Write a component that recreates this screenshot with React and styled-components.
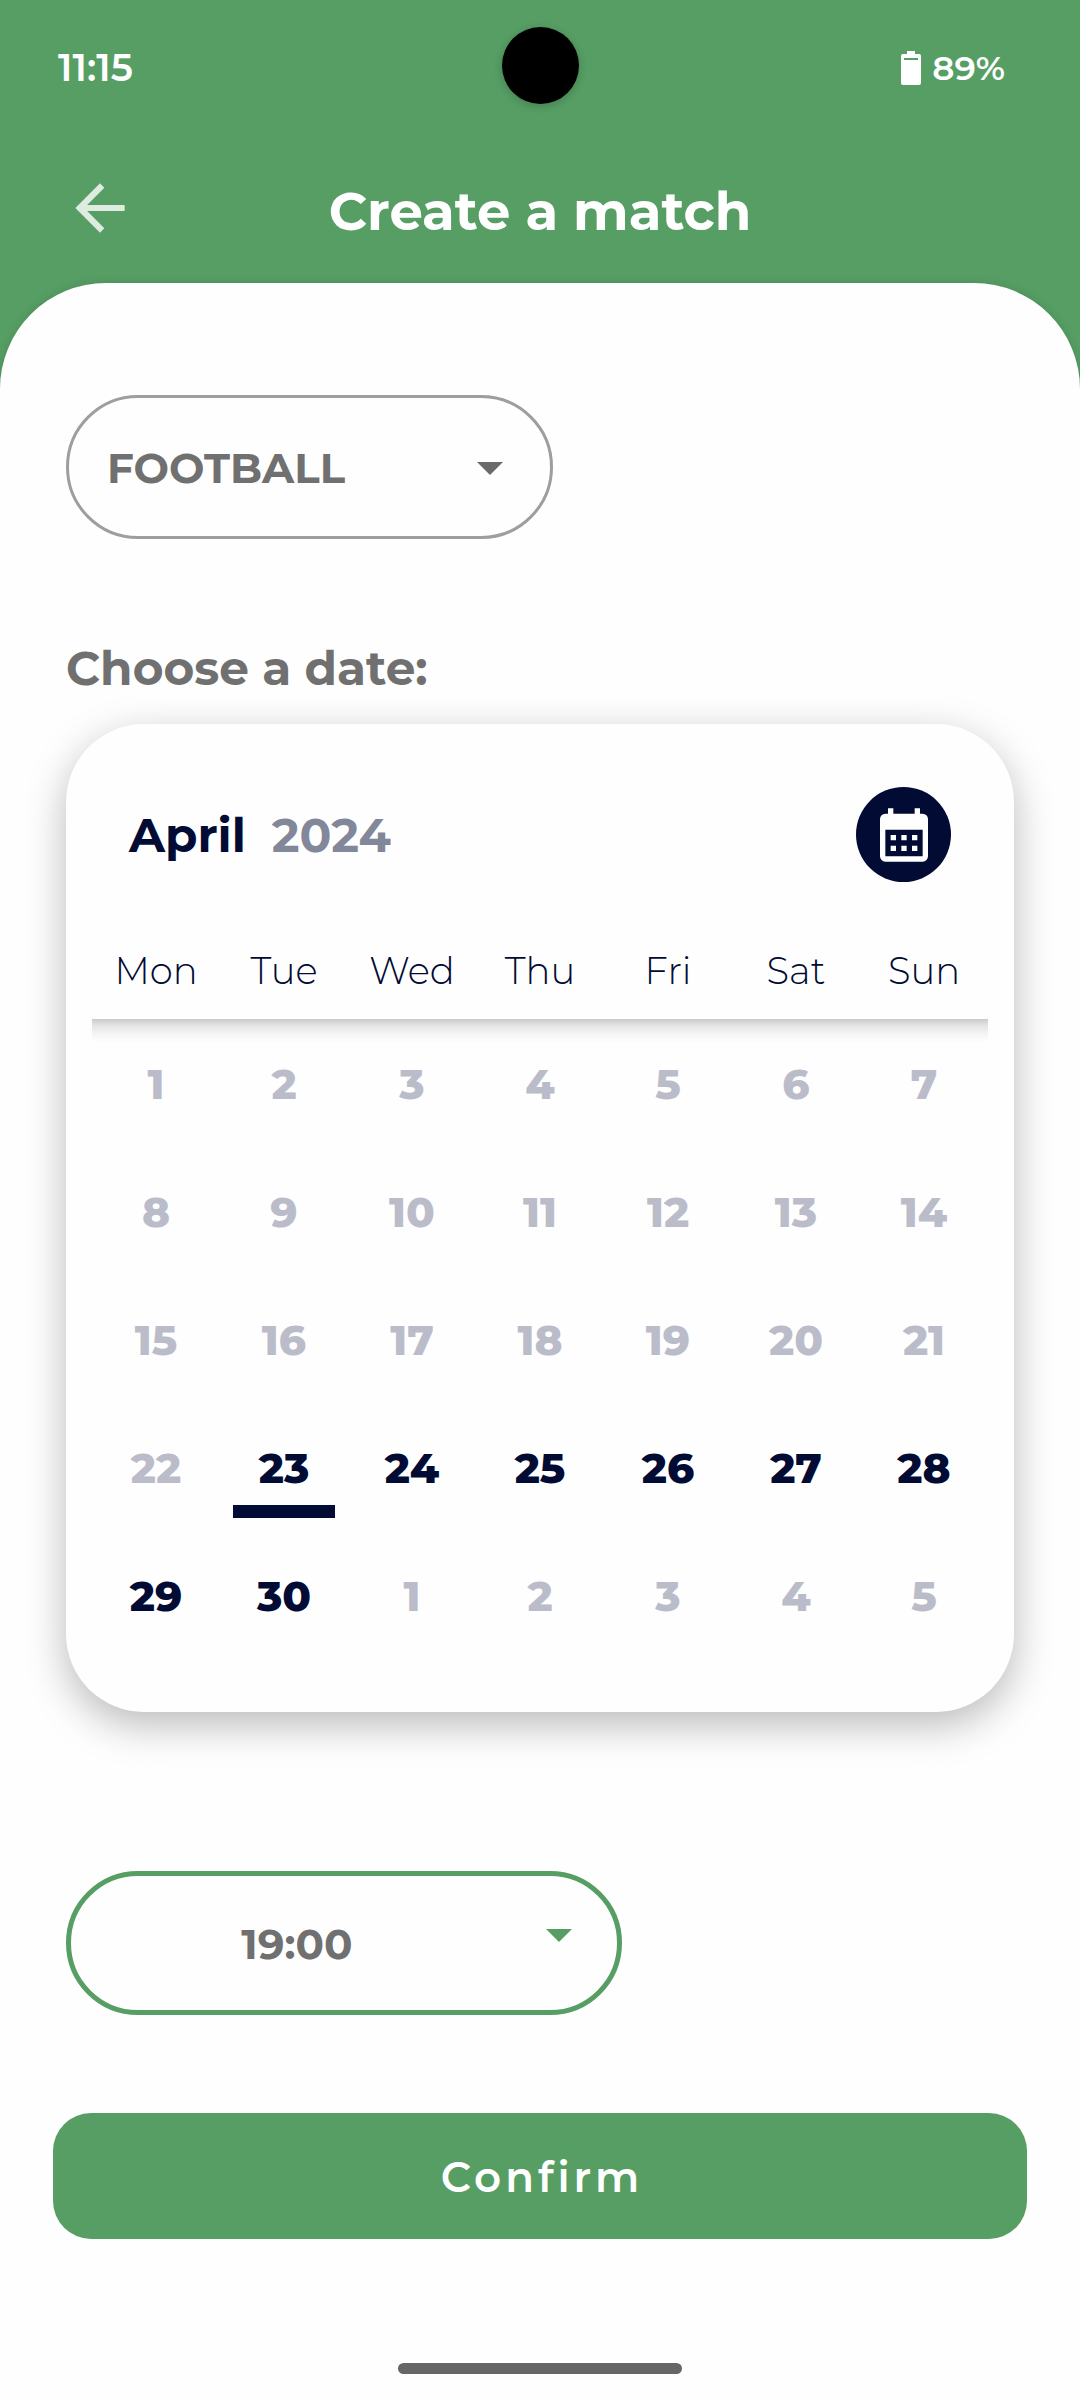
import React, { useState } from "react";
import styled, { createGlobalStyle } from "styled-components";

const color = {
  green: "#569e64",
  navy: "#010b33",
  grey: "#707070",
  line: "#9e9e9e",
  year: "#82879a",
  faded: "#babdc9",
  paper: "#fefefe",
};

const GlobalStyle = createGlobalStyle`
  *, *::before, *::after { box-sizing: border-box; }
  body { margin: 0; background: ${color.green}; }
  button, select { font: inherit; color: inherit; margin: 0; }
`;

const Screen = styled.div`
  display: flex;
  flex-direction: column;
  min-height: 100vh;
  background: ${color.green};
  color: ${color.grey};
  font-family: Montserrat, Inter, "Open Sans", sans-serif;
`;

const StatusBar = styled.div`
  display: grid;
  grid-template-columns: 1fr auto 1fr;
  align-items: center;
  height: 131px;
  padding: 0 58px;
  color: #fff;
  font-weight: 600;
  line-height: 44px;
`;

const Clock = styled.span`
  padding-top: 4px;
  font-size: 38px;
`;

const StatusGroup = styled.div`
  display: flex;
  align-items: center;
  justify-content: flex-end;
  gap: 11px;
  padding: 4px 17px 0 0;
  font-size: 34px;
`;

const Camera = styled.span`
  width: 77px;
  height: 77px;
  border-radius: 50%;
  background: #000;
  box-shadow: 0 2px 8px rgba(0, 0, 0, 0.2);
`;

const TitleBar = styled.header`
  display: grid;
  grid-template-columns: 1fr auto 1fr;
  align-items: center;
  height: 152px;
  padding: 2px 63px 0;
  color: #fff;
`;

const BackButton = styled.button`
  display: flex;
  justify-self: start;
  padding: 0;
  border: 0;
  background: none;
  color: #fff;
  opacity: 0.8;
  cursor: pointer;
`;

const Title = styled.h1`
  margin: 0;
  padding-top: 6px;
  font-size: 53px;
  font-weight: 700;
  line-height: 64px;
`;

const Sheet = styled.main`
  display: flex;
  flex: 1;
  flex-direction: column;
  align-items: stretch;
  padding: 112px 53px 26px;
  border-radius: 106px 106px 0 0;
  background: ${color.paper};
  box-shadow: 0 0 10px rgba(0, 0, 0, 0.12);
`;

const Fields = styled.div`
  display: flex;
  flex-direction: column;
  padding: 0 13px;
`;

const Picker = styled.div`
  display: grid;
  width: ${(p) => p.$width}px;
  max-width: 100%;
  height: 144px;
  color: ${(p) => p.$tone};

  > * { grid-area: 1 / 1; }
`;

const PickerSelect = styled.select`
  width: 100%;
  appearance: none;
  padding: 2px ${(p) => (p.$centered ? 94 : 40)}px 0 ${(p) => (p.$centered ? 0 : 38)}px;
  border: ${(p) => p.$stroke}px solid ${(p) => p.$tone};
  border-radius: 72px;
  background: transparent;
  color: ${color.grey};
  font-size: 42px;
  font-weight: 700;
  text-align-last: ${(p) => (p.$centered ? "center" : "left")};
  cursor: pointer;
`;

const Caret = styled.svg`
  align-self: ${(p) => (p.$raised ? "start" : "center")};
  justify-self: end;
  margin: ${(p) => (p.$raised ? 58 : 2)}px 50px 0 0;
  pointer-events: none;
`;

const DateLabel = styled.h2`
  margin: 102px 0 27px;
  font-size: 47px;
  font-weight: 700;
  line-height: 56px;
`;

const Card = styled.section`
  margin-bottom: 159px;
  padding: 63px 26px 53px;
  border-radius: 78px;
  background: ${color.paper};
  box-shadow: 0 13px 40px rgba(0, 0, 0, 0.27);
  color: ${color.navy};
`;

const CardHead = styled.div`
  display: flex;
  align-items: center;
  justify-content: space-between;
  margin-bottom: 39px;
  padding: 0 37px;
`;

const Month = styled.div`
  display: flex;
  gap: 26px;
  padding-top: 2px;
  font-size: 47px;
  font-weight: 700;
  line-height: 56px;
`;

const Year = styled.span`
  color: ${color.year};
`;

const CalendarButton = styled.button`
  display: flex;
  align-items: center;
  justify-content: center;
  width: 95px;
  height: 95px;
  padding: 0;
  border: 0;
  border-radius: 50%;
  background: ${color.navy};
  color: #fff;
  cursor: pointer;
`;

const Days = styled.table`
  width: 100%;
  table-layout: fixed;
  border-collapse: collapse;

  tbody {
    background: linear-gradient(#cacaca, #e6e6e6 30%, #f6f6f6 65%, ${color.paper}) no-repeat;
    background-size: 100% 24px;
  }
`;

const Weekday = styled.th`
  height: 98px;
  padding: 0;
  font-size: 37px;
  font-weight: 300;
`;

const DayCell = styled.td`
  height: 128px;
  padding: 2px 0 0;
  text-align: center;
`;

const DayButton = styled.button`
  width: 102px;
  height: 100px;
  padding: 13px 0 0;
  border: solid transparent;
  border-width: 0 0 13px;
  border-bottom-color: ${(p) => (p.$selected ? color.navy : "transparent")};
  background: none;
  color: ${color.navy};
  font-size: 42px;
  font-weight: 800;
  line-height: 48px;
  cursor: pointer;

  &:disabled {
    color: ${color.faded};
    cursor: default;
  }
`;

const Confirm = styled.button`
  height: 126px;
  margin-top: 98px;
  padding: 2px 0 0 4px;
  border: 0;
  border-radius: 38px;
  background: ${color.green};
  color: #fff;
  font-size: 42px;
  font-weight: 600;
  letter-spacing: 4px;
  cursor: pointer;
`;

const HomeBar = styled.div`
  align-self: center;
  width: 284px;
  height: 11px;
  margin-top: auto;
  border-radius: 6px;
  background: #666;
`;

const weekdays = ["Mon", "Tue", "Wed", "Thu", "Fri", "Sat", "Sun"];
const cells = Array.from({ length: 35 }, (_, i) => ({
  day: i < 30 ? i + 1 : i - 29,
  open: i >= 22 && i < 30,
}));
const weeks = [0, 1, 2, 3, 4].map((w) => cells.slice(w * 7, w * 7 + 7));

function Chevron({ raised }) {
  return (
    <Caret $raised={raised} width="26" height="13" viewBox="0 0 26 13" aria-hidden="true">
      <path d="M0 0h26L13 13z" fill="currentColor" />
    </Caret>
  );
}

export default function App() {
  const [selected, setSelected] = useState(23);

  return (
    <Screen>
      <GlobalStyle />
      <StatusBar>
        <Clock>11:15</Clock>
        <Camera />
        <StatusGroup>
          <svg width="20" height="34" viewBox="0 0 20 34" fill="#fff" aria-hidden="true">
            <path
              fillRule="evenodd"
              d="M6 0h8v3h4a2 2 0 0 1 2 2v27a2 2 0 0 1-2 2H2a2 2 0 0 1-2-2V5a2 2 0 0 1 2-2h4zM3 7v2h14V7z"
            />
          </svg>
          <span>89%</span>
        </StatusGroup>
      </StatusBar>

      <TitleBar>
        <BackButton type="button" aria-label="Back">
          <svg width="74" height="74" viewBox="0 0 24 24" fill="currentColor">
            <path d="M20 11H7.83l5.59-5.59L12 4l-8 8 8 8 1.41-1.41L7.83 13H20z" />
          </svg>
        </BackButton>
        <Title>Create a match</Title>
      </TitleBar>

      <Sheet>
        <Fields>
          <Picker $width={487} $tone="#6a6a6a">
            <PickerSelect aria-label="Sport" $stroke={3} $tone={color.line}>
              <option>FOOTBALL</option>
            </PickerSelect>
            <Chevron />
          </Picker>

          <DateLabel id="date-label">Choose a date:</DateLabel>
          <Card aria-labelledby="date-label">
            <CardHead>
              <Month>
                <span>April</span>
                <Year>2024</Year>
              </Month>
              <CalendarButton type="button" aria-label="Open calendar">
                <svg width="64" height="64" viewBox="0 0 24 24" fill="currentColor">
                  <path d="M7 12h2v2H7zM11 12h2v2h-2zM15 12h2v2h-2zM7 16h2v2H7zM11 16h2v2h-2zM15 16h2v2h-2z" />
                  <path
                    fillRule="evenodd"
                    d="M6 2h2v2h8V2h2v2h1a2 2 0 0 1 2 2v14a2 2 0 0 1-2 2H5a2 2 0 0 1-2-2V6a2 2 0 0 1 2-2h1zM5 10v10h14V10z"
                  />
                </svg>
              </CalendarButton>
            </CardHead>
            <Days>
              <thead>
                <tr>
                  {weekdays.map((name) => (
                    <Weekday key={name} scope="col">{name}</Weekday>
                  ))}
                </tr>
              </thead>
              <tbody>
                {weeks.map((week, w) => (
                  <tr key={w}>
                    {week.map(({ day, open }) => (
                      <DayCell key={day}>
                        <DayButton
                          type="button"
                          disabled={!open}
                          $selected={open && day === selected}
                          aria-pressed={open && day === selected}
                          onClick={() => setSelected(day)}
                        >
                          {day}
                        </DayButton>
                      </DayCell>
                    ))}
                  </tr>
                ))}
              </tbody>
            </Days>
          </Card>

          <Picker $width={556} $tone={color.green}>
            <PickerSelect aria-label="Time" $stroke={5} $tone={color.green} $centered>
              <option>19:00</option>
            </PickerSelect>
            <Chevron raised />
          </Picker>
        </Fields>

        <Confirm type="button">Confirm</Confirm>
        <HomeBar />
      </Sheet>
    </Screen>
  );
}
